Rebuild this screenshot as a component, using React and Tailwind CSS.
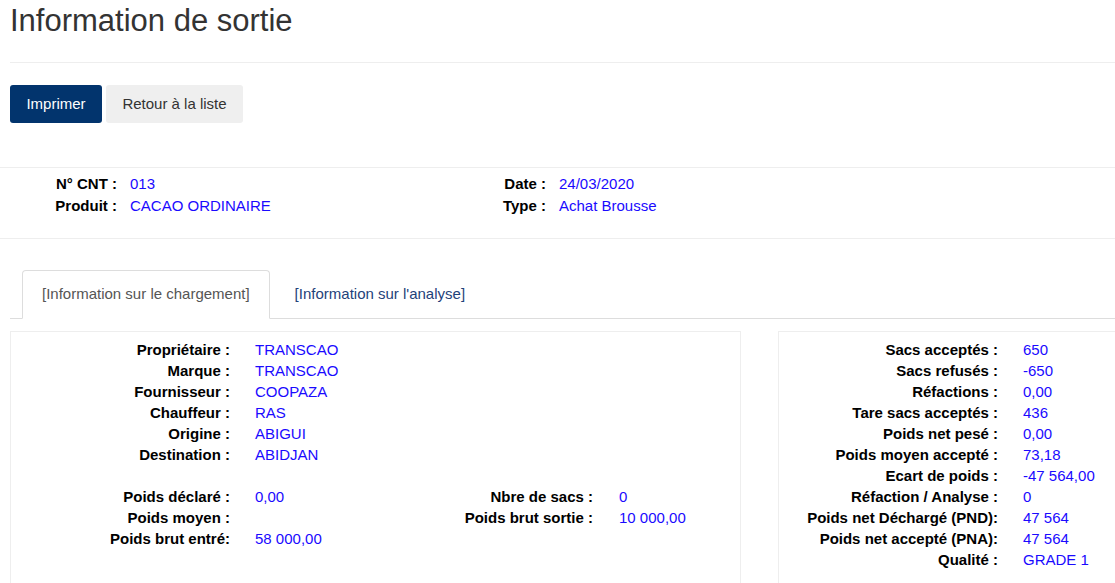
import React from "react";

const V = "text-[#1a0aff]";

function Row({ label, value, lw = "w-[219px]", gap = "ml-[25px]" }) {
  return (
    <div className="flex h-[21px] leading-[21px] whitespace-nowrap">
      <div className={`${lw} text-right font-bold text-black shrink-0`}>{label}</div>
      <div className={`${gap} ${V}`}>{value}</div>
    </div>
  );
}

export default function App() {
  const left1 = [
    ["Propriétaire :", "TRANSCAO"],
    ["Marque :", "TRANSCAO"],
    ["Fournisseur :", "COOPAZA"],
    ["Chauffeur :", "RAS"],
    ["Origine :", "ABIGUI"],
    ["Destination :", "ABIDJAN"],
  ];
  const right = [
    ["Sacs acceptés :", "650"],
    ["Sacs refusés :", "-650"],
    ["Réfactions :", "0,00"],
    ["Tare sacs acceptés :", "436"],
    ["Poids net pesé :", "0,00"],
    ["Poids moyen accepté :", "73,18"],
    ["Ecart de poids :", "-47 564,00"],
    ["Réfaction / Analyse :", "0"],
    ["Poids net Déchargé (PND):", "47 564"],
    ["Poids net accepté (PNA):", "47 564"],
    ["Qualité :", "GRADE 1"],
  ];
  return (
    <div
      className="w-[1115px] h-[583px] overflow-hidden bg-white text-[15px] text-[#333]"
      style={{ fontFamily: '"Liberation Sans", Arial, sans-serif' }}
    >
      <h1 className="pt-[4px] pl-[10px] text-[31px] leading-[33px] text-[#333] font-normal">
        Information de sortie
      </h1>
      <div className="mt-[25px] ml-[10px] border-t border-[#eeeeee]" />
      <div className="mt-[22px] ml-[10px] flex gap-[4px]">
        <button className="h-[38px] w-[92px] rounded-[3px] bg-[#02346d] text-white text-[15px] flex items-center justify-center">
          Imprimer
        </button>
        <button className="h-[38px] w-[137px] rounded-[3px] bg-[#efefef] text-[#333] text-[15px] flex items-center justify-center">
          Retour à la liste
        </button>
      </div>
      <div className="mt-[44px] border-t border-[#eeeeee]" />
      <div className="pt-[5px] pb-[21px] flex">
        <div className="w-[430px]">
          <div className="flex h-[22px] leading-[22px]">
            <div className="w-[117px] text-right font-bold text-black">N° CNT :</div>
            <div className={`ml-[13px] ${V}`}>013</div>
          </div>
          <div className="flex h-[22px] leading-[22px]">
            <div className="w-[117px] text-right font-bold text-black">Produit :</div>
            <div className={`ml-[13px] ${V}`}>CACAO ORDINAIRE</div>
          </div>
        </div>
        <div>
          <div className="flex h-[22px] leading-[22px]">
            <div className="w-[116px] text-right font-bold text-black">Date :</div>
            <div className={`ml-[13px] ${V}`}>24/03/2020</div>
          </div>
          <div className="flex h-[22px] leading-[22px]">
            <div className="w-[116px] text-right font-bold text-black">Type :</div>
            <div className={`ml-[13px] ${V}`}>Achat Brousse</div>
          </div>
        </div>
      </div>
      <div className="border-t border-[#eeeeee]" />

      <div className="mt-[31px] ml-[10px] border-b border-[#dddddd] pl-[12px] flex">
        <div className="h-[49px] -mb-px px-[19px] border border-[#dddddd] border-b-white bg-white rounded-t-[4px] flex items-center text-[#555]">
          [Information sur le chargement]
        </div>
        <div className="h-[49px] -mb-px ml-[4px] px-[20px] border border-transparent flex items-center text-[#1f427a]">
          [Information sur l'analyse]
        </div>
      </div>

      <div className="mt-[12px] flex">
        <div className="ml-[10px] w-[731px] h-[300px] border border-[#eeeeee] pt-[7px] shrink-0">
          {left1.map(([l, v]) => (
            <Row key={l} label={l} value={v} />
          ))}
          <div className="h-[21px]" />
          <div className="flex">
            <div className="w-[364px]">
              <Row label="Poids déclaré :" value="0,00" />
              <Row label="Poids moyen :" value="" />
              <Row label="Poids brut entré:" value="58 000,00" />
            </div>
            <div>
              <Row label="Nbre de sacs :" value="0" lw="w-[218px]" gap="ml-[26px]" />
              <Row label="Poids brut sortie :" value="10 000,00" lw="w-[218px]" gap="ml-[26px]" />
            </div>
          </div>
        </div>
        <div className="ml-[37px] w-[420px] h-[300px] border border-[#eeeeee] pt-[7px] shrink-0">
          {right.map(([l, v]) => (
            <Row key={l} label={l} value={v} />
          ))}
        </div>
      </div>
    </div>
  );
}
